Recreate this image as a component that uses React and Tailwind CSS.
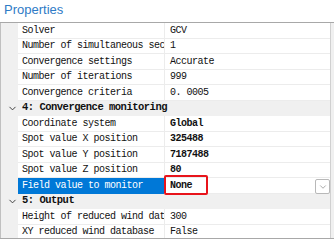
import { ChevronDown } from 'lucide-react';

const rows = [
    { name: 'Solver', value: 'GCV' },
    { name: 'Number of simultaneous sec', value: '1' },
    { name: 'Convergence settings', value: 'Accurate' },
    { name: 'Number of iterations', value: '999' },
    { name: 'Convergence criteria', value: '0. 0005' },
    { header: '4: Convergence monitoring' },
    { name: 'Coordinate system', value: 'Global', bold: true },
    { name: 'Spot value X position', value: '325488', bold: true },
    { name: 'Spot value Y position', value: '7187488', bold: true },
    { name: 'Spot value Z position', value: '80', bold: true },
    { name: 'Field value to monitor', value: 'None', bold: true, selected: true },
    { header: '5: Output' },
    { name: 'Height of reduced wind dat', value: '300' },
    { name: 'XY reduced wind database', value: 'False' },
];

export default function App() {
    return (
        <div className="w-[334px] h-[241px] bg-white overflow-hidden">
            {/* Title */}
            <div className="h-[22px] flex items-center pl-[4px] pb-[2px] text-[13px] text-[#2f7bc6] font-['Liberation_Sans',sans-serif]">
                Properties
            </div>

            {/* Property grid */}
            <div className="flex h-[217px] border-t border-b border-[#a8a8a8] font-['Liberation_Mono',monospace] text-[10px] tracking-[-0.5px] text-[#111]">
                <div className="flex-1 overflow-hidden border-l border-[#c0c0c0]">
                    {rows.map((row, i) =>
                        row.header ? (
                            <div key={i} className="h-[15.5px] flex items-center bg-[#f0f0f0] whitespace-nowrap">
                                <div className="w-[21px] flex justify-center pl-[1px]">
                                    <ChevronDown size={11} strokeWidth={2} className="text-[#333]" />
                                </div>
                                <span className="font-bold text-[10.5px]">{row.header}</span>
                            </div>
                        ) : (
                            <div key={i} className="h-[15.5px] flex">
                                <div className="w-[17px] bg-[#f0f0f0] shrink-0" />
                                <div
                                    className={`w-[146px] shrink-0 pl-[4px] flex items-center whitespace-nowrap overflow-hidden ${row.selected ? 'bg-[#0078d7] text-white' : 'border-b border-[#ececec]'}`}
                                >
                                    {row.name}
                                </div>
                                <div className="relative flex-1 flex items-center pl-[5px] border-l border-b border-[#ececec] whitespace-nowrap">
                                    <span className={row.bold ? 'font-bold' : ''}>{row.value}</span>
                                    {row.selected && (
                                        <>
                                            <div className="absolute left-[-1px] top-[-3px] w-[44px] h-[20px] border-2 border-[#e8141b] rounded-[2px]" />
                                            <div className="ml-auto mr-[0px] mt-[3px] w-[15px] h-[15px] flex items-center justify-center border border-[#b8b8b8] rounded-[2px] bg-white">
                                                <ChevronDown size={10} strokeWidth={1.5} className="text-[#777]" />
                                            </div>
                                        </>
                                    )}
                                </div>
                            </div>
                        )
                    )}
                </div>
                <div className="w-[4px] bg-[#f0f0f0] border-l border-[#d0d0d0]" />
            </div>
        </div>
    );
}
